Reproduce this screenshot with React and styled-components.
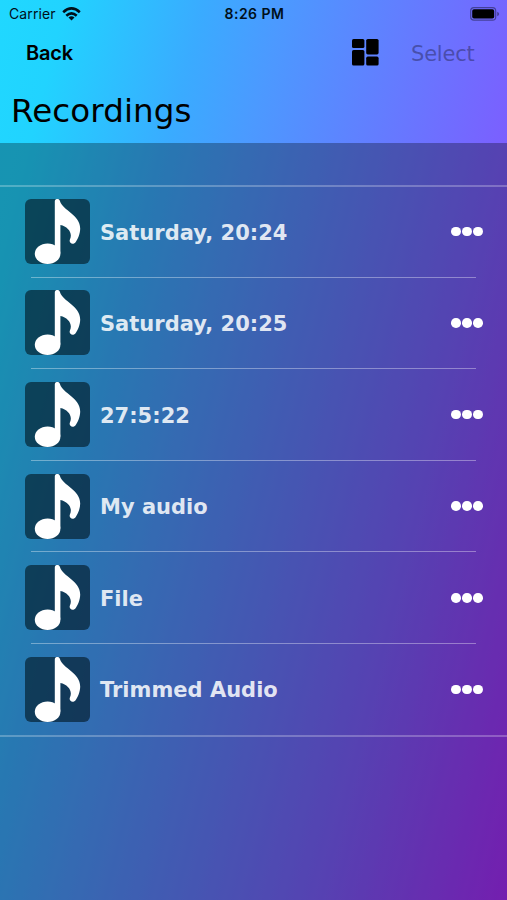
import React from 'react'
import styled, { createGlobalStyle } from 'styled-components'

const recordings = [
  'Saturday, 20:24',
  'Saturday, 20:25',
  '27:5:22',
  'My audio',
  'File',
  'Trimmed Audio'
]

const Wifi = () => (
  <svg width='19' height='14' viewBox='0 0 19 14'>
    <g fill='none' stroke='#00101a' strokeWidth='2.6'>
      <path d='M1.2 5.2Q9.5 -2.4 17.8 5.2' />
      <path d='M4.3 8.7Q9.5 3.9 14.7 8.7' />
    </g>
    <path d='M6.5 10.6Q9.5 8 12.5 10.6L9.5 13.5Z' fill='#00101a' />
  </svg>
)

const Battery = () => (
  <svg width='30' height='14' viewBox='0 0 30 14'>
    <rect x='.7' y='.7' width='25' height='12.4' rx='3.2' fill='none' stroke='#000' strokeOpacity='.4' strokeWidth='1.2' />
    <rect x='2.2' y='2.2' width='22' height='9.4' rx='1.8' />
    <path d='M27.2 4.7Q29.2 5.4 29.2 7T27.2 9.3Z' fillOpacity='.4' />
  </svg>
)

const Dashboard = () => (
  <svg width='27' height='27' viewBox='0 0 27 27'>
    <rect x='0' y='0' width='12.4' height='9' rx='1.6' />
    <rect x='0' y='11' width='12.4' height='15.6' rx='1.6' />
    <rect x='14.2' y='0' width='12.4' height='15.4' rx='1.6' />
    <rect x='14.2' y='17.6' width='12.4' height='9' rx='1.6' />
  </svg>
)

const Note = () => (
  <svg width='65' height='65' viewBox='0 0 65 65' fill='#fff'>
    <ellipse cx='22.6' cy='54.7' rx='12.8' ry='10.2' />
    <path d='M29.8 2.6C29.8 -.9 34.6 -.9 35 2.3C38 11.5 55.2 16 55.2 29.5C55.2 35 52.6 40.5 50.4 43.4C47.6 46.5 43.6 43.8 44.9 40.6C48 34 43 27.6 35.4 26V54.5H29.8Z' />
  </svg>
)

const Item = ({ name }) => (
  <Row>
    <Cover>
      <Note />
    </Cover>
    <Name>{name}</Name>
    <More aria-label='More'>
      <Dot />
      <Dot />
      <Dot />
    </More>
  </Row>
)

const App = () => (
  <Screen>
    <GlobalStyle />
    <StatusBar>
      <Carrier>
        Carrier
        <Wifi />
      </Carrier>
      <Clock>8:26 PM</Clock>
      <Power>
        <Battery />
      </Power>
    </StatusBar>
    <NavBar>
      <Back>Back</Back>
      <Dashboard />
      <Select>Select</Select>
    </NavBar>
    <Title>Recordings</Title>
    <Content>
      <List>
        {recordings.map(name => (
          <Item key={name} name={name} />
        ))}
      </List>
    </Content>
  </Screen>
)

const GlobalStyle = createGlobalStyle`
  body {
    margin: 0;
  }
`

const Screen = styled.div`
  display: flex;
  flex-direction: column;
  height: 900px;
  overflow: hidden;
  font-family: 'DejaVu Sans', Verdana, sans-serif;
  background: linear-gradient(
    104deg,
    #20d8ff 0%,
    #21d3ff 9%,
    #3aabff 28%,
    #4c99ff 39%,
    #7b5fff 74%,
    #a62cfb 100%
  );
`

const StatusBar = styled.div`
  display: grid;
  grid-template-columns: 1fr auto 1fr;
  align-items: center;
  height: 27px;
  padding: 0 7px 0 9px;
  box-sizing: border-box;
  font-family: Inter, sans-serif;
  font-size: 14px;
  color: #00101a;
`
const Carrier = styled.span`
  display: flex;
  align-items: center;
  gap: 6px;
  letter-spacing: 0.1px;
`
const Clock = styled.span`
  font-weight: 600;
  letter-spacing: 0.5px;
`
const Power = styled.span`
  display: flex;
  justify-content: flex-end;
`

const NavBar = styled.div`
  display: flex;
  align-items: center;
  height: 51px;
  padding: 0 32px 0 26px;
`
const Back = styled.span`
  flex: 1;
  font-family: Inter, sans-serif;
  font-size: 20px;
  font-weight: 600;
  letter-spacing: -0.15px;
`
const Select = styled.span`
  width: 64px;
  margin-left: 32px;
  padding-top: 2px;
  font-size: 21px;
  letter-spacing: -0.2px;
  color: rgba(40, 40, 90, 0.5);
`

const Title = styled.h1`
  height: 65px;
  margin: 0;
  padding-left: 11px;
  font-size: 32.5px;
  font-weight: 400;
  line-height: 66px;
  letter-spacing: 0.1px;
`

const Content = styled.div`
  flex: 1;
  padding-top: 41.5px;
  background: rgba(0, 0, 0, 0.3);
`
const List = styled.div`
  border: solid rgba(255, 255, 255, 0.25);
  border-width: 2px 0;
`
const Row = styled.div`
  display: flex;
  align-items: center;
  height: 91.6px;
  margin: 0 31px;
  box-sizing: border-box;
  & + & {
    border-top: 1px solid rgba(255, 255, 255, 0.36);
  }
  &:first-child {
    height: 90.2px;
  }
`
const Cover = styled.div`
  width: 65px;
  height: 65px;
  margin-left: -6px;
  border-radius: 6px;
  overflow: hidden;
  background: rgba(0, 20, 30, 0.6);
`
const Name = styled.span`
  flex: 1;
  padding: 2px 0 0 10px;
  font-size: 21px;
  font-weight: 700;
  color: rgba(255, 255, 255, 0.85);
`
const More = styled.span`
  display: flex;
  gap: 1.4px;
  margin-right: -7px;
`
const Dot = styled.i`
  width: 9.6px;
  height: 9.6px;
  border-radius: 50%;
  background: #fff;
`

export default App
